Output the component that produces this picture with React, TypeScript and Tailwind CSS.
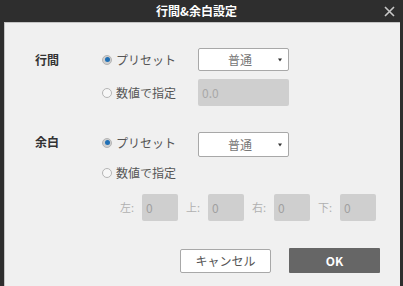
import React from 'react';

const font = { fontFamily: '"Noto Sans CJK JP", "Noto Sans", sans-serif' };

function Radio({ checked, label }: { checked?: boolean; label: string }) {
  return (
    <div className="flex items-center gap-[4px] text-[12px] text-[#555]">
      {checked ? (
        <span className="w-[10px] h-[10px] rounded-full bg-[#cfcfcf] border border-[#b5b5b5] flex items-center justify-center">
          <span className="w-[5px] h-[5px] rounded-full bg-[#1f6fb5]" />
        </span>
      ) : (
        <span className="w-[10px] h-[10px] rounded-full bg-[#f7f7f7] border border-[#b5b5b5]" />
      )}
      <span>{label}</span>
    </div>
  );
}

function Select({ h }: { h: string }) {
  return (
    <div className={`w-[91px] ${h} bg-white border-[1.5px] border-[#a8a8a8] rounded-[2px] flex items-center text-[12px] text-[#777] relative`}>
      <span className="ml-[29px]">普通</span>
      <span className="absolute right-[6px] top-1/2 -translate-y-1/2 w-0 h-0 border-l-[2.5px] border-r-[2.5px] border-t-[3px] border-l-transparent border-r-transparent border-t-[#333]" />
    </div>
  );
}

function SmallInput({ label }: { label: string }) {
  return (
    <div className="flex items-center">
      <span className="text-[11px] text-[#b0b0b0] w-[22px]">{label}</span>
      <div className="w-[36px] h-[27px] bg-[#cfcfcf] rounded-[2px] flex items-center pl-[4px] text-[12px] text-[#a0a0a0]">0</div>
    </div>
  );
}

export default function App() {
  return (
    <div className="w-[403px] h-[286px] bg-[#2e2e2e] flex flex-col overflow-hidden" style={font}>
      {/* Title bar */}
      <div className="h-[22px] shrink-0 relative flex items-center justify-center">
        <span className="text-[12px] font-bold text-white ml-[-10px]">行間&amp;余白設定</span>
        <svg className="absolute right-[8px] top-[6px]" width="11" height="11" viewBox="0 0 11 11">
          <path d="M1 1L10 10M10 1L1 10" stroke="#c8c8c8" strokeWidth="1.6" />
        </svg>
      </div>

      {/* Body */}
      <div className="flex-1 ml-[4px] mr-[3px] bg-[#f0f0f0] border-l border-t border-[#c4c4c4] pl-[30px]">
        {/* 行間 */}
        <div className="flex items-center mt-[25px] h-[23px]">
          <span className="w-[67px] text-[12px] text-[#333] font-bold">行間</span>
          <div className="w-[96px]"><Radio checked label="プリセット" /></div>
          <Select h="h-[23px]" />
        </div>
        <div className="flex items-center mt-[8px] h-[27px]">
          <span className="w-[67px]" />
          <div className="w-[96px]"><Radio label="数値で指定" /></div>
          <div className="w-[91px] h-[27px] bg-[#cfcfcf] rounded-[2px] flex items-center pl-[4px] text-[12px] text-[#a8a8a8]">0.0</div>
        </div>

        {/* 余白 */}
        <div className="flex items-center mt-[26px] h-[25px]">
          <span className="w-[67px] text-[12px] text-[#333] font-bold pb-[6px]">余白</span>
          <div className="w-[96px] pb-[4px]"><Radio checked label="プリセット" /></div>
          <Select h="h-[25px]" />
        </div>
        <div className="flex items-center mt-[8px] h-[16px]">
          <span className="w-[67px]" />
          <Radio label="数値で指定" />
        </div>
        <div className="flex items-center mt-[13px] h-[27px] pl-[85px] gap-[8px]">
          <SmallInput label="左:" />
          <SmallInput label="上:" />
          <SmallInput label="右:" />
          <SmallInput label="下:" />
        </div>

        {/* Buttons */}
        <div className="flex items-center mt-[27px] pl-[145px] gap-[18px]">
          <button className="w-[91px] h-[24px] bg-white border-[1.5px] border-[#a8a8a8] rounded-[2px] text-[12px] text-[#555]">
            キャンセル
          </button>
          <button className="w-[91px] h-[25px] bg-[#666666] rounded-[1px] text-[12px] font-bold text-white">
            OK
          </button>
        </div>
      </div>
    </div>
  );
}
